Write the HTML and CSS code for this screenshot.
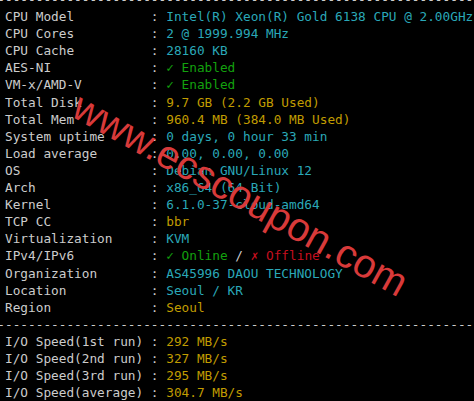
FILE: index.html
```html
<!DOCTYPE html>
<html>
<head>
<meta charset="utf-8">
<link rel="stylesheet" href="styles.css">
</head>
<body>
<div class="term">
<div class="row sep">--------------------------------------------------------------</div>
<div class="row">CPU Model          : <span class="cy">Intel(R) Xeon(R) Gold 6138 CPU @ 2.00GHz</span></div>
<div class="row">CPU Cores          : <span class="cy">2 @ 1999.994 MHz</span></div>
<div class="row">CPU Cache          : <span class="cy">28160 KB</span></div>
<div class="row">AES-NI             : <span class="gr">✓ Enabled</span></div>
<div class="row">VM-x/AMD-V         : <span class="gr">✓ Enabled</span></div>
<div class="row">Total Disk         : <span class="ye">9.7 GB (2.2 GB Used)</span></div>
<div class="row">Total Mem          : <span class="ye">960.4 MB (384.0 MB Used)</span></div>
<div class="row">System uptime      : <span class="cy">0 days, 0 hour 33 min</span></div>
<div class="row">Load average       : <span class="cy">0.00, 0.00, 0.00</span></div>
<div class="row">OS                 : <span class="cy">Debian GNU/Linux 12</span></div>
<div class="row">Arch               : <span class="cy">x86_64 (64 Bit)</span></div>
<div class="row">Kernel             : <span class="cy">6.1.0-37-cloud-amd64</span></div>
<div class="row">TCP CC             : <span class="ye">bbr</span></div>
<div class="row">Virtualization     : <span class="cy">KVM</span></div>
<div class="row">IPv4/IPv6          : <span class="gr">✓ Online</span> / <span class="rd">✗ Offline</span></div>
<div class="row">Organization       : <span class="cy">AS45996 DAOU TECHNOLOGY</span></div>
<div class="row">Location           : <span class="cy">Seoul / KR</span></div>
<div class="row">Region             : <span class="ye">Seoul</span></div>
<div class="row sep">--------------------------------------------------------------</div>
<div class="row">I/O Speed(1st run) : <span class="ye">292 MB/s</span></div>
<div class="row">I/O Speed(2nd run) : <span class="ye">327 MB/s</span></div>
<div class="row">I/O Speed(3rd run) : <span class="ye">295 MB/s</span></div>
<div class="row">I/O Speed(average) : <span class="ye">304.7 MB/s</span></div>
</div>
<svg class="watermark" width="474" height="401" viewBox="0 0 474 401" xmlns="http://www.w3.org/2000/svg">
  <text x="69.5" y="115.4" transform="rotate(29 69.5 115.4)" class="wm-text">www.ecscoupon.com</text>
</svg>
</body>
</html>
```

FILE: styles.css
```css
html, body {
  margin: 0;
  padding: 0;
  background: #000;
  width: 474px;
  height: 401px;
  overflow: hidden;
}

body {
  position: relative;
}

.term {
  margin-top: -9px;
  padding-left: 5px;
  font-family: "DejaVu Sans Mono", "Liberation Mono", monospace;
  font-size: 12.75px;
  line-height: 17.1px;
  color: #cccccc;
}

.row {
  white-space: pre;
  height: 17.1px;
}

.sep {
  margin-left: -1ch;
}

.cy { color: #2aa8b8; }
.gr { color: #13a10e; }
.ye { color: #c19c00; }
.rd { color: #c50f1f; }

.watermark {
  position: absolute;
  left: 0;
  top: 0;
  pointer-events: none;
}

.wm-text {
  font-family: "Liberation Sans", Arial, sans-serif;
  font-size: 40px;
  fill: #d83a3a;
}
```
